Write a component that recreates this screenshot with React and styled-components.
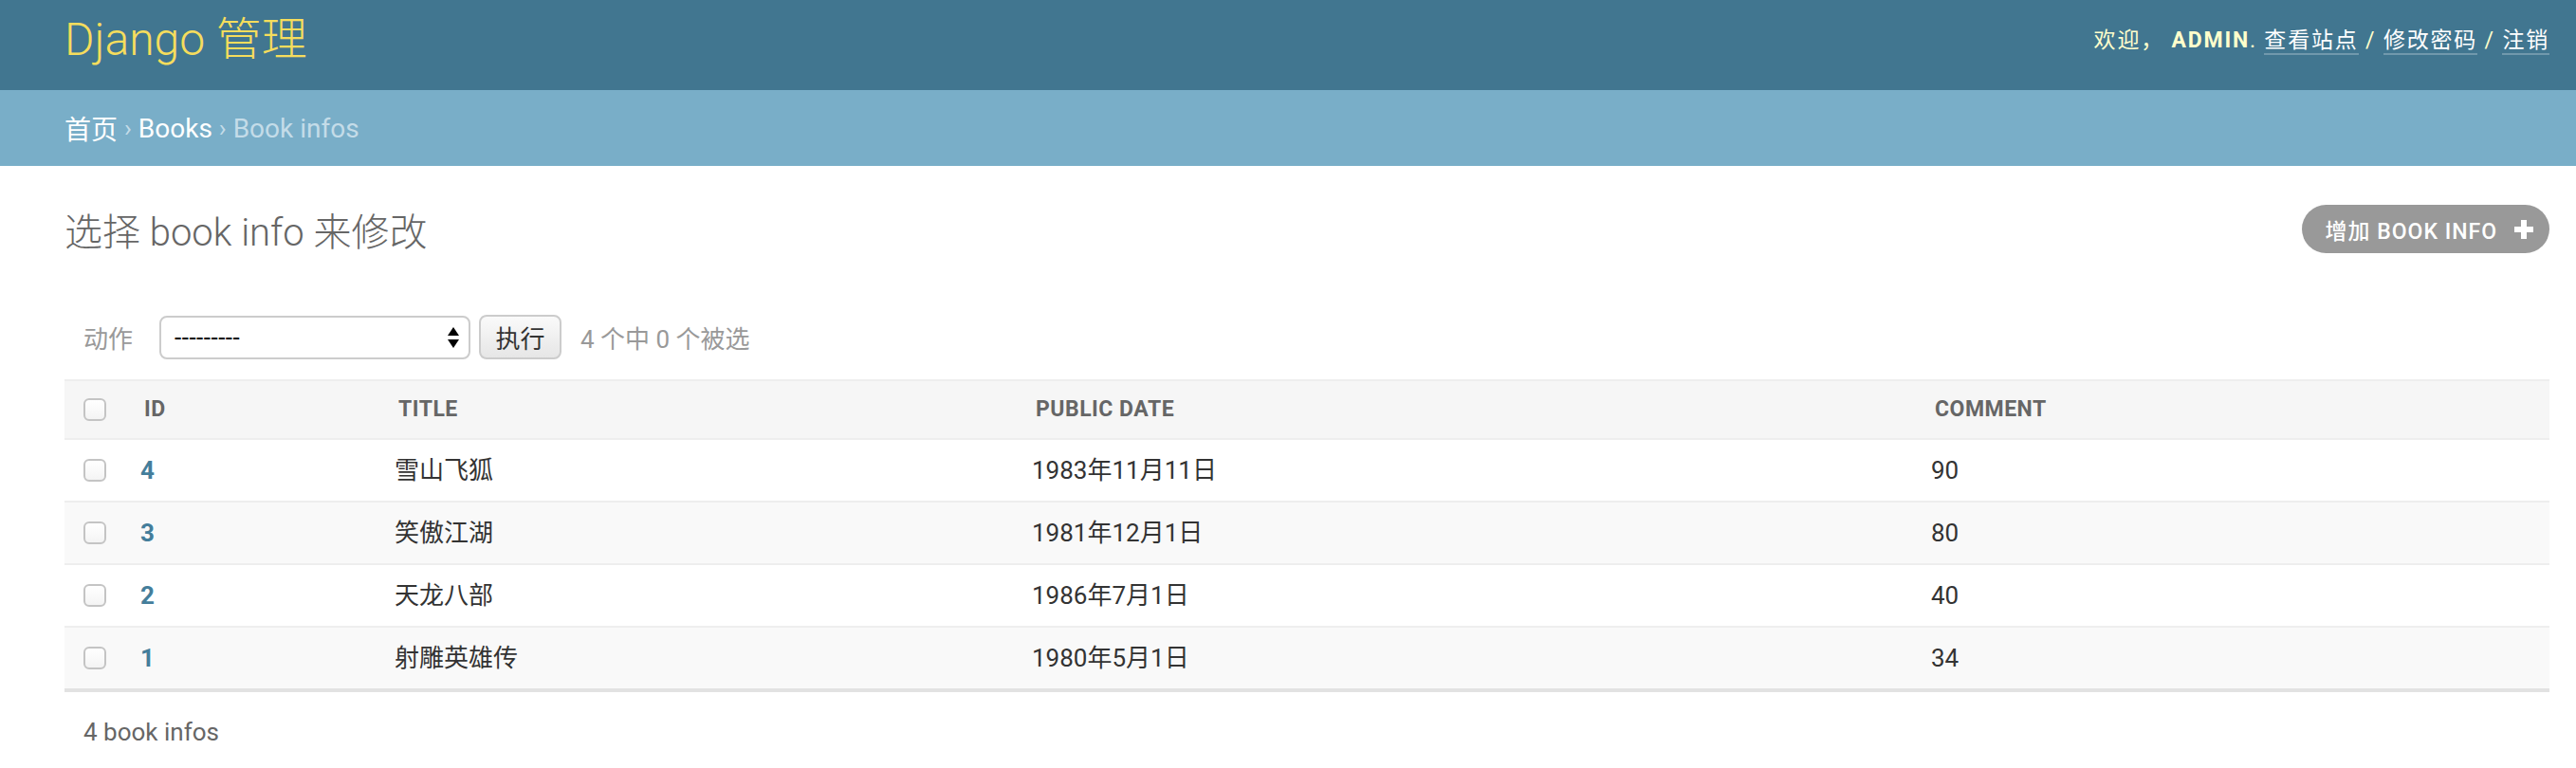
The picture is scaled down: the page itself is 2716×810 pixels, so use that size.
import React from "react";
import styled, { createGlobalStyle } from "styled-components";

const rows = [
  { id: 4, title: "雪山飞狐", date: "1983年11月11日", comment: 90 },
  { id: 3, title: "笑傲江湖", date: "1981年12月1日", comment: 80 },
  { id: 2, title: "天龙八部", date: "1986年7月1日", comment: 40 },
  { id: 1, title: "射雕英雄传", date: "1980年5月1日", comment: 34 },
];

const columns = [
  { label: "", width: 60 },
  { label: "ID", width: 268 },
  { label: "Title", width: 672 },
  { label: "Public date", width: 948 },
  { label: "Comment", width: 672 },
];

const GlobalStyle = createGlobalStyle`
  body {
    margin: 0;
    background: #fff;
    color: #333;
    font-family: Roboto, "Noto Sans CJK SC", "Liberation Sans", sans-serif;
  }
  * { box-sizing: border-box; }
`;

const Checkbox = ({ header }) => <Box $header={header} />;

const PlusIcon = () => (
  <svg width="20" height="20" viewBox="0 0 20 20">
    <rect x="7" y="0" width="6" height="20" fill="#fff" />
    <rect x="0" y="7" width="20" height="6" fill="#fff" />
  </svg>
);

const SelectArrows = () => (
  <svg width="12" height="22" viewBox="0 0 12 22">
    <polygon points="6,0 12,9 0,9" fill="#000" />
    <polygon points="0,13 12,13 6,22" fill="#000" />
  </svg>
);

const App = () => {
  return (
    <Page>
      <GlobalStyle />
      <Header>
        <Branding>Django 管理</Branding>
        <UserTools>
          欢迎， <strong>admin</strong>. <ToolLink>查看站点</ToolLink> /{" "}
          <ToolLink>修改密码</ToolLink> / <ToolLink>注销</ToolLink>
        </UserTools>
      </Header>
      <Breadcrumbs>
        <Crumb>首页</Crumb>
        <Sep>›</Sep>
        <Crumb>Books</Crumb>
        <Sep>›</Sep>
        <Current>Book infos</Current>
      </Breadcrumbs>
      <Content>
        <TitleRow>
          <Title>选择 book info 来修改</Title>
          <AddButton>
            增加 book info
            <PlusIcon />
          </AddButton>
        </TitleRow>
        <Actions>
          <ActionLabel>动作</ActionLabel>
          <SelectWrap>
            <Select defaultValue="">
              <option value="">---------</option>
            </Select>
            <ArrowHolder>
              <SelectArrows />
            </ArrowHolder>
          </SelectWrap>
          <GoButton>执行</GoButton>
          <Counter>4 个中 0 个被选</Counter>
        </Actions>
        <Table>
          <colgroup>
            {columns.map((c, i) => (
              <col key={i} style={{ width: c.width }} />
            ))}
          </colgroup>
          <thead>
            <tr>
              {columns.map((c, i) => (
                <Th key={i} $first={i === 0}>
                  {i === 0 ? <Checkbox header /> : c.label}
                </Th>
              ))}
            </tr>
          </thead>
          <tbody>
            {rows.map((r, i) => (
              <Row key={r.id} $alt={i % 2 === 1} $last={i === rows.length - 1}>
                <td>
                  <Checkbox />
                </td>
                <td>
                  <IdLink>{r.id}</IdLink>
                </td>
                <td>{r.title}</td>
                <td>{r.date}</td>
                <td>{r.comment}</td>
              </Row>
            ))}
          </tbody>
        </Table>
        <Paginator>4 book infos</Paginator>
      </Content>
    </Page>
  );
};

const Page = styled.div`
  width: 100%;
`;

const Header = styled.header`
  display: flex;
  align-items: center;
  justify-content: space-between;
  height: 95px;
  padding: 0 28px 0 68px;
  background: #417690;
`;

const Branding = styled.h1`
  margin: 0 0 12px 0;
  font-size: 48px;
  line-height: 48px;
  font-weight: 300;
  color: #f5dd5d;
`;

const UserTools = styled.div`
  margin-bottom: 10px;
  font-size: 23px;
  line-height: 30px;
  letter-spacing: 1.8px;
  color: #ffc;
  strong {
    font-weight: 700;
    text-transform: uppercase;
  }
`;

const ToolLink = styled.span`
  color: #fff;
  border-bottom: 2px solid rgba(255, 255, 255, 0.25);
`;

const Breadcrumbs = styled.div`
  display: flex;
  align-items: center;
  gap: 7px;
  height: 80px;
  padding: 0 68px;
  background: #79aec8;
  font-size: 28px;
  color: #c4dce8;
`;

const Crumb = styled.span`
  color: #fff;
`;

const Sep = styled.span`
  color: #c4dce8;
  font-size: 26px;
`;

const Current = styled.span`
  color: #c4dce8;
`;

const Content = styled.div`
  padding: 0 28px 0 68px;
`;

const TitleRow = styled.div`
  display: flex;
  align-items: center;
  justify-content: space-between;
  margin-top: 41px;
  height: 51px;
`;

const Title = styled.h1`
  margin: 0;
  font-size: 40px;
  font-weight: 300;
  color: #666;
`;

const AddButton = styled.span`
  display: flex;
  align-items: center;
  gap: 18px;
  height: 51px;
  padding: 0 17px 0 24px;
  border-radius: 30px;
  background: #999;
  color: #fff;
  font-size: 23px;
  font-weight: 500;
  letter-spacing: 1px;
  text-transform: uppercase;
`;

const Actions = styled.div`
  display: flex;
  align-items: center;
  margin-top: 65px;
  padding-left: 20px;
  height: 47px;
  font-size: 26px;
`;

const ActionLabel = styled.span`
  color: #999;
  margin-right: 28px;
`;

const SelectWrap = styled.div`
  position: relative;
  width: 328px;
  height: 46px;
`;

const Select = styled.select`
  appearance: none;
  width: 100%;
  height: 100%;
  padding: 0 14px;
  border: 2px solid #ccc;
  border-radius: 8px;
  background: #fff;
  color: #000;
  font-family: Roboto, sans-serif;
  font-size: 26px;
  letter-spacing: 0.5px;
`;

const ArrowHolder = styled.span`
  position: absolute;
  right: 12px;
  top: 12px;
  line-height: 0;
  pointer-events: none;
`;

const GoButton = styled.button`
  margin-left: 9px;
  width: 87px;
  height: 47px;
  border: 2px solid #ccc;
  border-radius: 8px;
  background: linear-gradient(#fafafa, #e6e6e6);
  color: #333;
  font-family: inherit;
  font-size: 26px;
  padding: 0;
`;

const Counter = styled.span`
  margin-left: 20px;
  color: #999;
`;

const Table = styled.table`
  margin-top: 21px;
  width: 100%;
  table-layout: fixed;
  border-collapse: collapse;
  font-size: 26px;
`;

const Th = styled.th`
  padding: 15px 20px 15px ${(p) => (p.$first ? 20 : 24)}px;
  line-height: 30px;
  text-align: left;
  background: #f6f6f6;
  border-top: 2px solid #eee;
  border-bottom: 2px solid #eee;
  color: #666;
  font-size: 23px;
  font-weight: 700;
  letter-spacing: 0.5px;
  text-transform: uppercase;
`;

const Row = styled.tr`
  background: ${(p) => (p.$alt ? "#f9f9f9" : "#fff")};
  td {
    padding: 16px 20px;
    line-height: 32px;
    color: #333;
    border-bottom: ${(p) => (p.$last ? "4px solid #e2e2e2" : "2px solid #eee")};
    vertical-align: middle;
  }
`;

const Box = styled.span`
  display: block;
  width: 24px;
  height: 24px;
  border: 2px solid #c4c4c4;
  border-radius: 6px;
  background: linear-gradient(#fff, #f4f4f4);
`;

const IdLink = styled.span`
  color: #447e9b;
  font-weight: 700;
`;

const Paginator = styled.div`
  padding: 20px 20px;
  line-height: 44px;
  font-size: 26px;
  color: #666;
`;

export default App;
